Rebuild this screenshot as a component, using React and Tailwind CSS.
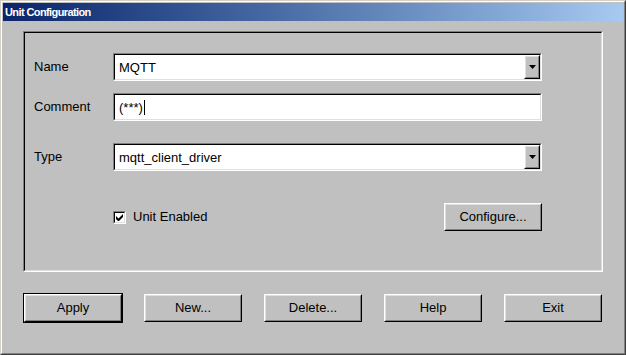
import React from 'react';

const font = { fontFamily: '"Liberation Sans", Arial, sans-serif' };

const Sunken = ({ className = '', children }) => (
    <div className={`border border-t-[#808080] border-l-[#808080] border-b-white border-r-white ${className}`}>
        <div className="h-full w-full border border-t-black border-l-black border-b-[#dfdfdf] border-r-[#dfdfdf] bg-white flex items-center">
            {children}
        </div>
    </div>
);

const Raised = ({ className = '', children }) => (
    <div className={`border border-t-white border-l-white border-b-black border-r-black ${className}`}>
        <div className="h-full w-full border border-t-[#dfdfdf] border-l-[#dfdfdf] border-b-[#808080] border-r-[#808080] bg-[#c0c0c0] flex items-center justify-center">
            {children}
        </div>
    </div>
);

const Field = ({ value, dropdown, caret }) => (
    <Sunken className="w-[429px] h-[28px]">
        <span className="pl-[4px] text-[13px] text-black leading-none flex-1 flex items-center">
            {value}
            {caret && <span className="inline-block w-px h-[15px] bg-black ml-px" />}
        </span>
        {dropdown && (
            <Raised className="w-[16px] h-full">
                <svg width="7" height="4" viewBox="0 0 7 4">
                    <path d="M0 0h7L3.5 4z" fill="#000" />
                </svg>
            </Raised>
        )}
    </Sunken>
);

const Row = ({ label, children, className = '' }) => (
    <div className={`flex items-center ${className}`}>
        <span className="w-[79px] text-[13px] text-black">{label}</span>
        {children}
    </div>
);

const buttons = ['Apply', 'New...', 'Delete...', 'Help', 'Exit'];

export default function App() {
    return (
        <div style={font} className="w-[626px] h-[355px] bg-[#c0c0c0] border border-t-[#d4d0c8] border-l-[#d4d0c8] border-b-[#404040] border-r-[#404040]">
            <div className="h-full border border-t-white border-l-white border-b-[#808080] border-r-[#808080] p-px flex flex-col">
                {/* Title bar */}
                <div className="h-[18px] bg-gradient-to-r from-[#0a246a] to-[#a6caf0] flex items-center pl-[2px]">
                    <span className="text-white font-bold text-[11px] tracking-[-0.6px]">Unit Configuration</span>
                </div>

                {/* Group box */}
                <div className="ml-[20px] mt-[10px] w-[580px] h-[241px] border border-t-[#808080] border-l-[#808080] border-b-white border-r-white">
                    <div className="h-full border border-t-black border-l-black border-b-[#dfdfdf] border-r-[#dfdfdf] pl-[9px] pt-[20px] flex flex-col">
                        <Row label="Name">
                            <Field value="MQTT" dropdown />
                        </Row>
                        <Row label="Comment" className="mt-[12px]">
                            <Field value="(***)" caret />
                        </Row>
                        <Row label="Type" className="mt-[22px]">
                            <Field value="mqtt_client_driver" dropdown />
                        </Row>
                        <div className="mt-[32px] w-[508px] flex items-center">
                            <div className="w-[79px]" />
                            <div className="w-[13px] h-[13px] border border-t-[#808080] border-l-[#808080] border-b-white border-r-white">
                                <div className="w-full h-full border border-t-black border-l-black border-b-[#dfdfdf] border-r-[#dfdfdf] bg-white flex items-center justify-center">
                                    <svg width="7" height="7" viewBox="0 0 7 7">
                                        <path d="M0 2v3l2 2h1l4-4V0L2.5 4.5z" fill="#000" />
                                    </svg>
                                </div>
                            </div>
                            <span className="ml-[7px] text-[13px] text-black">Unit Enabled</span>
                            <Raised className="ml-auto w-[98px] h-[28px]">
                                <span className="text-[13px] text-black">Configure...</span>
                            </Raised>
                        </div>
                    </div>
                </div>

                {/* Bottom buttons */}
                <div className="ml-[20px] mt-[21px] flex gap-[20px]">
                    {buttons.map((b, i) => (
                        <div key={b} className={`w-[100px] h-[30px] ${i === 0 ? 'border border-black' : 'p-px'}`}>
                            <Raised className="w-full h-full">
                                <span className="text-[13px] text-black">{b}</span>
                            </Raised>
                        </div>
                    ))}
                </div>
            </div>
        </div>
    );
}
